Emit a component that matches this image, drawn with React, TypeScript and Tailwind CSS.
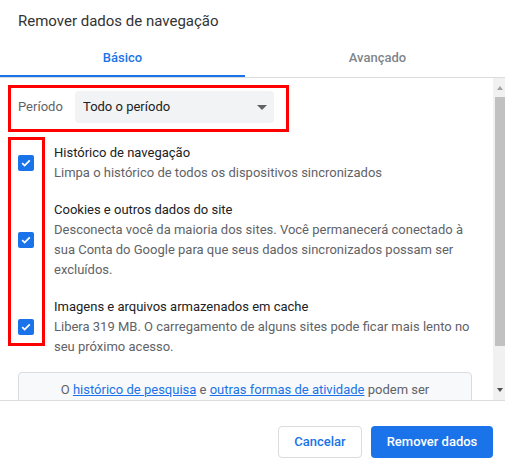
import React from "react";

const items = [
  {
    title: "Histórico de navegação",
    desc: "Limpa o histórico de todos os dispositivos sincronizados",
  },
  {
    title: "Cookies e outros dados do site",
    desc: "Desconecta você da maioria dos sites. Você permanecerá conectado à sua Conta do Google para que seus dados sincronizados possam ser excluídos.",
  },
  {
    title: "Imagens e arquivos armazenados em cache",
    desc: "Libera 319 MB. O carregamento de alguns sites pode ficar mais lento no seu próximo acesso.",
  },
];

function Checkbox() {
  return (
    <span className="flex h-4 w-4 items-center justify-center rounded-[2px] bg-[#1a73e8]">
      <svg width="12" height="12" viewBox="0 0 12 12" fill="none">
        <path d="M2.2 6.2l2.4 2.4 5.2-5.2" stroke="white" strokeWidth="1.8" />
      </svg>
    </span>
  );
}

function Scrollbar() {
  return (
    <div className="flex w-[12px] shrink-0 flex-col bg-[#f1f1f1]">
      <div className="flex h-[19px] items-center justify-center pl-[2px]">
        <span className="h-0 w-0 border-x-[3px] border-b-[4px] border-x-transparent border-b-[#a3a3a3]" />
      </div>
      <div className="ml-[2px] h-[249px] bg-[#c1c1c1]" />
      <div className="flex-1" />
      <div className="flex h-[19px] items-center justify-center pb-[2px] pl-[2px]">
        <span className="h-0 w-0 border-x-[3px] border-t-[4px] border-x-transparent border-t-[#505050]" />
      </div>
    </div>
  );
}

export default function App() {
  return (
    <div className="flex h-[469px] w-[505px] flex-col bg-white font-['Roboto',sans-serif] text-[13px] text-[#202124]">
      <div className="h-[38px] px-[18px] pt-[11px] text-[15px] leading-5 text-[#333]">
        Remover dados de navegação
      </div>

      <div className="flex h-[40px] border-b border-[#dadce0]">
        <div className="flex w-[245px] items-center justify-center border-b-2 border-[#1a73e8] pt-[2px] font-medium text-[#1a73e8]">
          Básico
        </div>
        <div className="flex flex-1 items-center justify-center pl-[5px] font-medium text-[#80868b]">
          Avançado
        </div>
      </div>

      <div className="flex h-[322px]">
        <div className="relative flex-1 overflow-hidden pl-[18px] pr-[21px]">
          <div className="mt-[13px] flex items-center">
            <span className="w-[57px] text-[#5f6368]">Período</span>
            <div className="flex h-[32px] w-[199px] items-center justify-between rounded-[4px] bg-[#f1f3f4] pl-[8px] pr-[7px]">
              <span>Todo o período</span>
              <span className="h-0 w-0 border-x-[5px] border-t-[5px] border-x-transparent border-t-[#5f6368]" />
            </div>
          </div>

          <div className="mt-[20px] flex flex-col gap-[17px]">
            {items.map((item) => (
              <div key={item.title} className="flex items-center">
                <div className="w-[36px] shrink-0">
                  <Checkbox />
                </div>
                <div className="leading-5">
                  <div>{item.title}</div>
                  <div className="text-[#5f6368]">{item.desc}</div>
                </div>
              </div>
            ))}
          </div>

          <div className="mt-[15px] rounded-[4px] border border-[#dadce0] bg-[#f8f9fa] px-[34px] pt-[7px] pb-4 text-center leading-5 text-[#5f6368]">
            O <span className="text-[#1a73e8] underline">histórico de pesquisa</span> e{" "}
            <span className="text-[#1a73e8] underline">outras formas de atividade</span> podem ser
            salvos na sua Conta do Google quando você está conectado.
          </div>

          <div className="pointer-events-none absolute left-[8px] top-[7px] h-[47px] w-[281px] border-[3px] border-[#ff0000]" />
          <div className="pointer-events-none absolute left-[8px] top-[59px] h-[209px] w-[37px] border-[3px] border-[#ff0000]" />
        </div>
        <Scrollbar />
      </div>

      <div className="flex flex-1 items-start justify-end gap-[9px] border-t border-[#dadce0] pr-[12px] pt-[25px]">
        <button className="h-[32px] w-[84px] rounded-[4px] border border-[#dadce0] bg-white font-medium text-[#1a73e8]">
          Cancelar
        </button>
        <button className="h-[32px] w-[122px] rounded-[4px] bg-[#1a73e8] font-medium text-white">
          Remover dados
        </button>
      </div>
    </div>
  );
}
